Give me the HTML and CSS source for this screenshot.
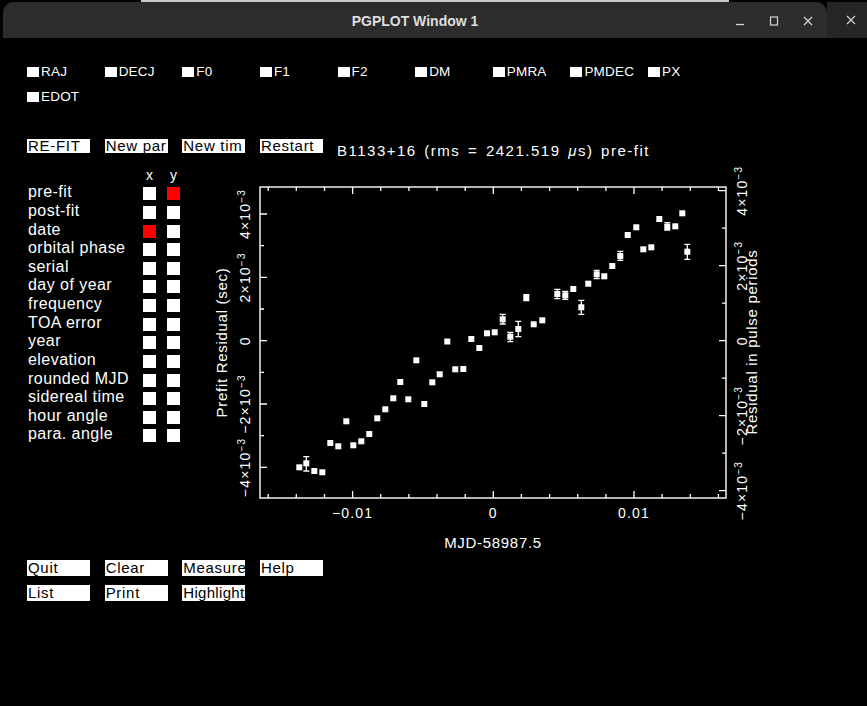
FILE: index.html
```html
<!DOCTYPE html>
<html lang="en">
<head>
<meta charset="utf-8">
<title>PGPLOT Window 1</title>
<link rel="stylesheet" href="styles.css">
</head>
<body>
<div class="desk">
  <div class="topline"></div>
  <div class="backwin">
    <svg class="icon" width="10" height="10" viewBox="0 0 10 10"><path d="M1 1L9 9M9 1L1 9" stroke="#cfcfcf" stroke-width="1.3" fill="none"/></svg>
  </div>
  <div class="window">
    <header class="titlebar">
      <div></div>
      <div class="title">PGPLOT Window 1</div>
      <div class="controls">
        <svg class="icon" width="10" height="10" viewBox="0 0 10 10"><path d="M1 8.5H9" stroke="#d4d4d4" stroke-width="1.3" fill="none"/></svg>
        <svg class="icon" width="10" height="10" viewBox="0 0 10 10"><rect x="1.5" y="1" width="7" height="8" stroke="#d4d4d4" stroke-width="1.2" fill="none"/></svg>
        <svg class="icon" width="10" height="10" viewBox="0 0 10 10"><path d="M1 1L9 9M9 1L1 9" stroke="#d4d4d4" stroke-width="1.3" fill="none"/></svg>
      </div>
    </header>
    <main class="canvas">
      <div class="params">
        <span class="param"><i class="chk"></i>RAJ</span>
        <span class="param"><i class="chk"></i>DECJ</span>
        <span class="param"><i class="chk"></i>F0</span>
        <span class="param"><i class="chk"></i>F1</span>
        <span class="param"><i class="chk"></i>F2</span>
        <span class="param"><i class="chk"></i>DM</span>
        <span class="param"><i class="chk"></i>PMRA</span>
        <span class="param"><i class="chk"></i>PMDEC</span>
        <span class="param"><i class="chk"></i>PX</span>
        <span class="param"><i class="chk"></i>EDOT</span>
      </div>
      <div class="toolbar">
        <div class="btns">
          <span class="btn">RE-FIT</span>
          <span class="btn">New par</span>
          <span class="btn">New tim</span>
          <span class="btn">Restart</span>
        </div>
        <div class="plot-title">B1133+16 (rms = 2421.519 <span class="mu">μ</span>s) pre-fit</div>
      </div>
      <div class="middle">
        <div class="axes-select">
          <div class="axis-row head"><span class="lbl"></span><span class="hd">x</span><span class="hd y">y</span></div>
          <div class="axis-row"><span class="lbl">pre-fit</span><i class="sq"></i><i class="sq y on"></i></div>
          <div class="axis-row"><span class="lbl">post-fit</span><i class="sq"></i><i class="sq y"></i></div>
          <div class="axis-row"><span class="lbl">date</span><i class="sq on"></i><i class="sq y"></i></div>
          <div class="axis-row"><span class="lbl">orbital phase</span><i class="sq"></i><i class="sq y"></i></div>
          <div class="axis-row"><span class="lbl">serial</span><i class="sq"></i><i class="sq y"></i></div>
          <div class="axis-row"><span class="lbl">day of year</span><i class="sq"></i><i class="sq y"></i></div>
          <div class="axis-row"><span class="lbl">frequency</span><i class="sq"></i><i class="sq y"></i></div>
          <div class="axis-row"><span class="lbl">TOA error</span><i class="sq"></i><i class="sq y"></i></div>
          <div class="axis-row"><span class="lbl">year</span><i class="sq"></i><i class="sq y"></i></div>
          <div class="axis-row"><span class="lbl">elevation</span><i class="sq"></i><i class="sq y"></i></div>
          <div class="axis-row"><span class="lbl">rounded MJD</span><i class="sq"></i><i class="sq y"></i></div>
          <div class="axis-row"><span class="lbl">sidereal time</span><i class="sq"></i><i class="sq y"></i></div>
          <div class="axis-row"><span class="lbl">hour angle</span><i class="sq"></i><i class="sq y"></i></div>
          <div class="axis-row"><span class="lbl">para. angle</span><i class="sq"></i><i class="sq y"></i></div>
        </div>
        <svg class="plot" width="570" height="395" viewBox="200 160 570 395">
          <rect x="260" y="187" width="466" height="311" fill="none" stroke="#fff" stroke-width="1.4"/>
          <path class="ticks" d="
            M268.2 498v-4M296.3 498v-4M324.5 498v-4M352.6 498v-7M380.7 498v-4M408.9 498v-4M437 498v-4M465.2 498v-4M493.3 498v-7M521.4 498v-4M549.6 498v-4M577.7 498v-4M605.9 498v-4M634 498v-7M662.1 498v-4M690.3 498v-4M718.4 498v-4
            M268.2 187v4M296.3 187v4M324.5 187v4M352.6 187v7M380.7 187v4M408.9 187v4M437 187v4M465.2 187v4M493.3 187v7M521.4 187v4M549.6 187v4M577.7 187v4M605.9 187v4M634 187v7M662.1 187v4M690.3 187v4M718.4 187v4
            M260 214h7M260 245.7h4M260 277.4h7M260 309h4M260 340.7h7M260 372.4h4M260 404h7M260 435.7h4M260 467.4h7
            M726 190.7h-7M726 228.2h-4M726 265.7h-7M726 303.2h-4M726 340.7h-7M726 378.2h-4M726 415.7h-7M726 453.2h-4M726 490.7h-7"/>

          <g class="lab">
            <text transform="translate(250 214) rotate(-90)">4×10<tspan dy="-5" class="sup">−3</tspan></text>
            <text transform="translate(250 277.4) rotate(-90)">2×10<tspan dy="-5" class="sup">−3</tspan></text>
            <text transform="translate(250 340.7) rotate(-90)">0</text>
            <text transform="translate(250 404) rotate(-90)">−2×10<tspan dy="-5" class="sup">−3</tspan></text>
            <text transform="translate(250 467.4) rotate(-90)">−4×10<tspan dy="-5" class="sup">−3</tspan></text>

            <text transform="translate(747 190.7) rotate(-90)">4×10<tspan dy="-5" class="sup">−3</tspan></text>
            <text transform="translate(747 265.7) rotate(-90)">2×10<tspan dy="-5" class="sup">−3</tspan></text>
            <text transform="translate(747 340.7) rotate(-90)">0</text>
            <text transform="translate(747 415.7) rotate(-90)">−2×10<tspan dy="-5" class="sup">−3</tspan></text>
            <text transform="translate(747 490.7) rotate(-90)">−4×10<tspan dy="-5" class="sup">−3</tspan></text>

            <text x="352.6" y="517.5">−0.01</text>
            <text x="493.3" y="517.5">0</text>
            <text x="634" y="517.5">0.01</text>

            <text class="axt" x="493" y="548.3">MJD-58987.5</text>
            <text class="axt" transform="translate(227 342.5) rotate(-90)">Prefit Residual (sec)</text>
            <text class="axt" transform="translate(757 342) rotate(-90)">Residual in pulse periods</text>
          </g>

          <path class="err" d="
            M306.3 456.7V471M303.3 456.7h6M303.3 471h6
            M502.7 314.3V324M499.7 314.3h6M499.7 324h6
            M510.3 332.3V341.7M507.3 332.3h6M507.3 341.7h6
            M518.3 321.3V336.7M515.3 321.3h6M515.3 336.7h6
            M526.3 294V300.7M523.3 300.7h6
            M557.3 289.3V298.7M554.3 289.3h6M554.3 298.7h6
            M565.3 291.3V299.3M562.3 291.3h6M562.3 299.3h6
            M581.3 300.3V314.3M578.3 300.3h6M578.3 314.3h6
            M596.7 270.3V278.7M593.7 270.3h6M593.7 278.7h6
            M620.3 251.3V260.3M617.3 251.3h6M617.3 260.3h6
            M667.3 222.7V230M664.3 222.7h6M664.3 230h6
            M687.3 244.3V259.3M684.3 244.3h6M684.3 259.3h6"/>

          <g class="pts">
            <rect x="296.3" y="464.3"/><rect x="303.3" y="460.3"/><rect x="311.3" y="468"/><rect x="319.3" y="469.3"/>
            <rect x="327.3" y="440"/><rect x="335.3" y="443.3"/><rect x="343.3" y="418.3"/><rect x="350.3" y="442.3"/>
            <rect x="358.3" y="438.3"/><rect x="366.3" y="431"/><rect x="374.3" y="415.3"/><rect x="382.3" y="406.3"/>
            <rect x="390.3" y="395.3"/><rect x="397.3" y="379"/><rect x="405.3" y="396.3"/><rect x="413.3" y="357.3"/>
            <rect x="421.3" y="401"/><rect x="429.3" y="379.3"/><rect x="436.7" y="371.3"/><rect x="444.3" y="338.5"/>
            <rect x="452.3" y="366.3"/><rect x="460.3" y="366"/><rect x="468.3" y="336"/><rect x="476.3" y="345"/>
            <rect x="484" y="330.3"/><rect x="491.7" y="329.3"/><rect x="499.7" y="316.3"/><rect x="507.3" y="333.7"/>
            <rect x="515.3" y="326"/><rect x="523.3" y="294"/><rect x="530.7" y="321.3"/><rect x="539.3" y="317.3"/>
            <rect x="554.3" y="291"/><rect x="562.3" y="292.3"/><rect x="570.3" y="286"/><rect x="578.3" y="304.3"/>
            <rect x="585.3" y="280.7"/><rect x="593.7" y="271.3"/><rect x="601.3" y="273.3"/><rect x="609.3" y="263"/>
            <rect x="617.3" y="253"/><rect x="624.7" y="232"/><rect x="633.3" y="224.3"/><rect x="640.3" y="246.3"/>
            <rect x="648.3" y="244.3"/><rect x="656.3" y="216"/><rect x="664.3" y="223.7"/><rect x="672.3" y="223.3"/>
            <rect x="679.3" y="210.3"/><rect x="684.3" y="248.7"/>
          </g>
        </svg>
      </div>
      <div class="actions">
        <span class="btn tall">Quit</span>
        <span class="btn tall">Clear</span>
        <span class="btn tall">Measure</span>
        <span class="btn tall">Help</span>
        <span class="btn tall">List</span>
        <span class="btn tall">Print</span>
        <span class="btn tall fit">Highlight</span>
      </div>
    </main>
  </div>
</div>
</body>
</html>
```

FILE: styles.css
```css
* { box-sizing: border-box; margin: 0; padding: 0; }

html, body {
  width: 867px;
  height: 706px;
  overflow: hidden;
  background: #000;
}

body {
  font-family: "Liberation Sans", Arial, sans-serif;
  color: #fff;
}

.desk {
  position: relative;
  width: 867px;
  height: 706px;
  background: #000;
  overflow: hidden;
}

/* windows behind the PGPLOT window */
.topline {
  position: absolute;
  left: 141px;
  top: 0;
  width: 588px;
  height: 2px;
  background: #c8c8c8;
}

.backwin {
  position: absolute;
  left: 812px;
  top: 2px;
  width: 60px;
  height: 36px;
  background: #252525;
  display: flex;
  align-items: center;
  padding-left: 34px;
}

.window {
  position: absolute;
  left: 3px;
  top: 2px;
  width: 824px;
  height: 704px;
  background: #000;
}

.titlebar {
  height: 36px;
  background: #2c2c2c;
  border-radius: 11px 11px 0 0;
  display: grid;
  grid-template-columns: 1fr auto 1fr;
  align-items: center;
  padding-top: 2px;
}

.title {
  font-family: "Liberation Sans", Arial, sans-serif;
  font-weight: 700;
  font-size: 14px;
  color: #dedede;
}

.controls {
  display: flex;
  justify-content: flex-end;
  align-items: center;
  gap: 24px;
  padding-right: 14px;
}

.icon { display: block; }

/* drawing surface */
.canvas {
  padding: 21px 0 0 24px;
}

.params {
  display: grid;
  grid-template-columns: repeat(9, 77.625px);
  grid-auto-rows: 25px;
}

.param {
  display: flex;
  align-items: center;
  font-size: 13.5px;
  line-height: 25px;
  letter-spacing: 0.2px;
  color: #fff;
}

.chk {
  display: block;
  width: 12px;
  height: 10px;
  background: #fff;
  margin-right: 2px;
}

.toolbar {
  margin-top: 30px;
  display: flex;
  align-items: flex-start;
  height: 14px;
}

.btns {
  display: grid;
  grid-template-columns: repeat(3, 77.67px) 63px;
}

.btn {
  display: block;
  width: 63px;
  height: 14px;
  background: #fff;
  color: #000;
  font-size: 15px;
  line-height: 14px;
  letter-spacing: 0.7px;
  padding-left: 1px;
  white-space: nowrap;
}

.btn.tall {
  height: 16px;
  line-height: 16px;
}

.btn.fit { letter-spacing: 0.3px; }

.plot-title {
  margin-left: 14px;
  padding-top: 5px;
  font-size: 15px;
  line-height: 14px;
  letter-spacing: 1.5px;
  word-spacing: 2px;
  white-space: nowrap;
}

.mu { font-style: italic; }

.middle {
  margin-top: 7px;
  display: flex;
  align-items: flex-start;
}

.axes-select {
  width: 173px;
  padding-top: 6px;
}

.axis-row {
  display: flex;
  align-items: center;
  height: 18.62px;
}

.axis-row .lbl {
  width: 116px;
  font-size: 16px;
  line-height: 14px;
  letter-spacing: 0.45px;
  padding-bottom: 3px;
  padding-left: 1px;
  white-space: nowrap;
}

.sq {
  display: block;
  width: 13px;
  height: 13px;
  background: #fff;
}

.sq.y { margin-left: 11px; }
.sq.on { background: #ff0000; }

.hd {
  width: 13px;
  text-align: center;
  font-size: 14px;
  line-height: 14px;
}
.hd.y { margin-left: 11px; }

.plot {
  display: block;
  flex: none;
}

.plot .ticks,
.plot .err {
  fill: none;
  stroke: #fff;
  stroke-width: 1.3;
}

.plot .pts rect {
  width: 6px;
  height: 6px;
  fill: #fff;
}

.plot .lab text {
  font-family: "Liberation Sans", Arial, sans-serif;
  font-size: 14px;
  fill: #fff;
  text-anchor: middle;
  letter-spacing: 1.2px;
}

.plot .lab .sup { font-size: 10px; }

.plot .lab text.axt {
  font-size: 15px;
  letter-spacing: 0.7px;
}

.actions {
  margin-top: 5px;
  display: grid;
  grid-template-columns: repeat(4, 77.67px);
  grid-auto-rows: 16px;
  row-gap: 9px;
}
```
